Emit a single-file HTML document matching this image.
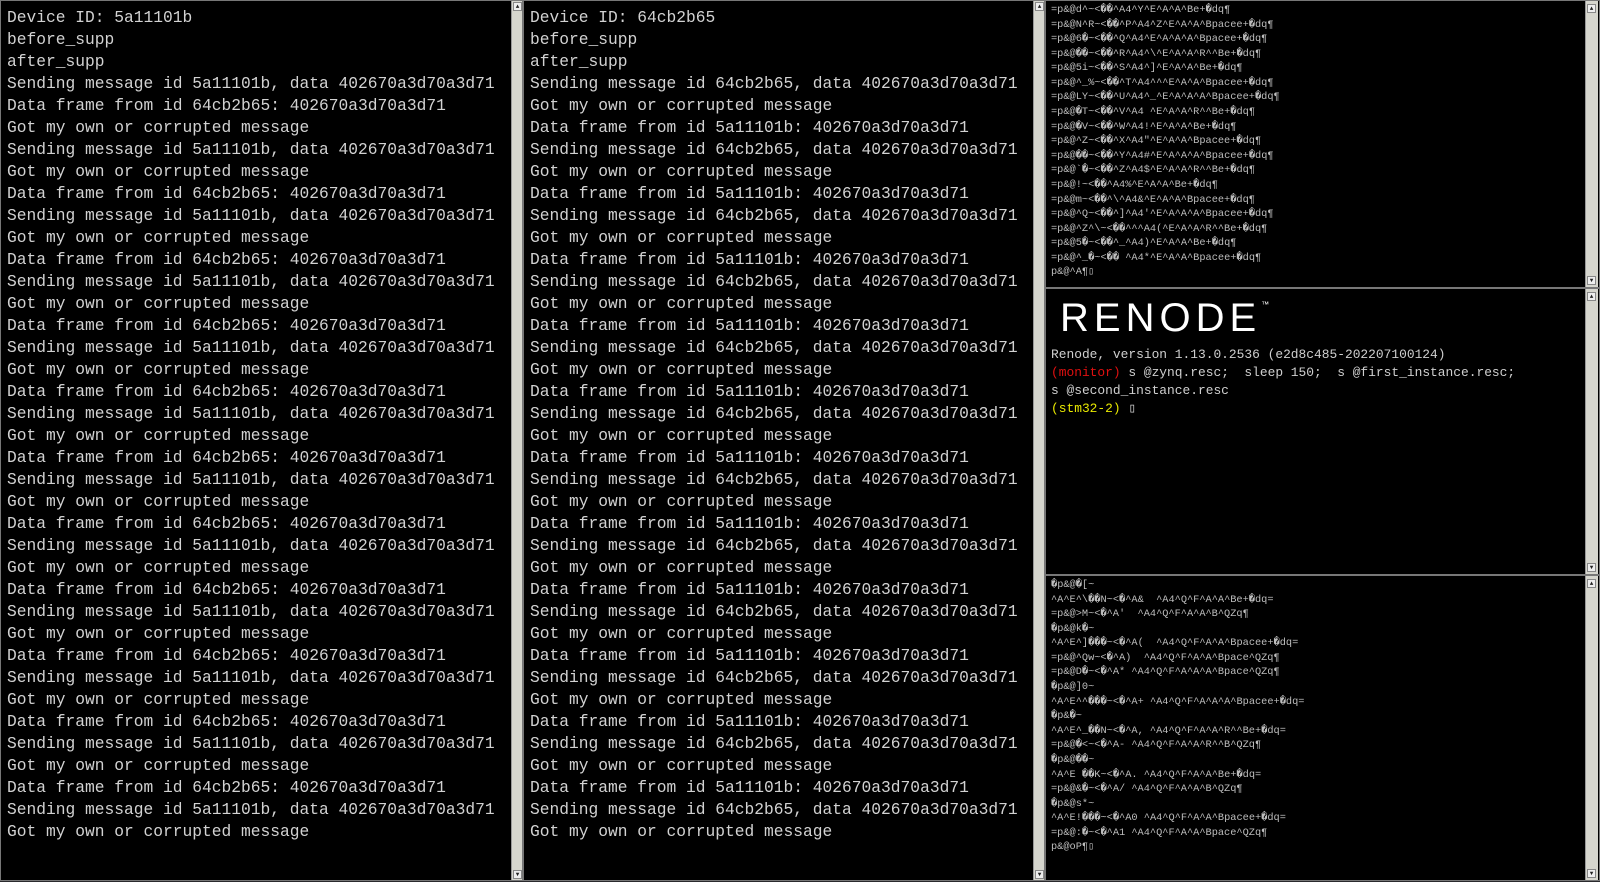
<!DOCTYPE html>
<html><head><meta charset="utf-8"><style>
*{margin:0;padding:0;box-sizing:border-box}
body{width:1600px;height:882px;background:#2a2a2d;overflow:hidden;position:relative;font-family:"Liberation Mono",monospace}
.p{position:absolute;background:#000;border:1px solid #777;overflow:hidden}
.sb{position:absolute;background:#d6d6ce;border-left:1px solid #999}
.ar{position:absolute;left:1px;width:9px;height:9px;background:#eee;border:1px solid #888;font-size:6px;line-height:7px;text-align:center;color:#222}
pre{font-family:"Liberation Mono","DejaVu Sans Mono",monospace;white-space:pre;position:absolute}
.big{font-size:16.25px;line-height:22px;color:#d2d2d2;left:6px;top:6px}
.sm{font-size:10.3px;line-height:14.58px;color:#bdbdbd;left:5px}
</style></head><body>

<div class="p" style="left:0;top:0;width:523px;height:881px">
<pre class="big">Device ID: 5a11101b
before_supp
after_supp
Sending message id 5a11101b, data 402670a3d70a3d71
Data frame from id 64cb2b65: 402670a3d70a3d71
Got my own or corrupted message
Sending message id 5a11101b, data 402670a3d70a3d71
Got my own or corrupted message
Data frame from id 64cb2b65: 402670a3d70a3d71
Sending message id 5a11101b, data 402670a3d70a3d71
Got my own or corrupted message
Data frame from id 64cb2b65: 402670a3d70a3d71
Sending message id 5a11101b, data 402670a3d70a3d71
Got my own or corrupted message
Data frame from id 64cb2b65: 402670a3d70a3d71
Sending message id 5a11101b, data 402670a3d70a3d71
Got my own or corrupted message
Data frame from id 64cb2b65: 402670a3d70a3d71
Sending message id 5a11101b, data 402670a3d70a3d71
Got my own or corrupted message
Data frame from id 64cb2b65: 402670a3d70a3d71
Sending message id 5a11101b, data 402670a3d70a3d71
Got my own or corrupted message
Data frame from id 64cb2b65: 402670a3d70a3d71
Sending message id 5a11101b, data 402670a3d70a3d71
Got my own or corrupted message
Data frame from id 64cb2b65: 402670a3d70a3d71
Sending message id 5a11101b, data 402670a3d70a3d71
Got my own or corrupted message
Data frame from id 64cb2b65: 402670a3d70a3d71
Sending message id 5a11101b, data 402670a3d70a3d71
Got my own or corrupted message
Data frame from id 64cb2b65: 402670a3d70a3d71
Sending message id 5a11101b, data 402670a3d70a3d71
Got my own or corrupted message
Data frame from id 64cb2b65: 402670a3d70a3d71
Sending message id 5a11101b, data 402670a3d70a3d71
Got my own or corrupted message</pre>
<div class="sb" style="left:510px;top:0;width:12px;height:880px"><div class="ar" style="top:1px">▲</div><div class="ar" style="bottom:2px">▼</div></div>
</div>

<div class="p" style="left:523px;top:0;width:522px;height:881px">
<pre class="big">Device ID: 64cb2b65
before_supp
after_supp
Sending message id 64cb2b65, data 402670a3d70a3d71
Got my own or corrupted message
Data frame from id 5a11101b: 402670a3d70a3d71
Sending message id 64cb2b65, data 402670a3d70a3d71
Got my own or corrupted message
Data frame from id 5a11101b: 402670a3d70a3d71
Sending message id 64cb2b65, data 402670a3d70a3d71
Got my own or corrupted message
Data frame from id 5a11101b: 402670a3d70a3d71
Sending message id 64cb2b65, data 402670a3d70a3d71
Got my own or corrupted message
Data frame from id 5a11101b: 402670a3d70a3d71
Sending message id 64cb2b65, data 402670a3d70a3d71
Got my own or corrupted message
Data frame from id 5a11101b: 402670a3d70a3d71
Sending message id 64cb2b65, data 402670a3d70a3d71
Got my own or corrupted message
Data frame from id 5a11101b: 402670a3d70a3d71
Sending message id 64cb2b65, data 402670a3d70a3d71
Got my own or corrupted message
Data frame from id 5a11101b: 402670a3d70a3d71
Sending message id 64cb2b65, data 402670a3d70a3d71
Got my own or corrupted message
Data frame from id 5a11101b: 402670a3d70a3d71
Sending message id 64cb2b65, data 402670a3d70a3d71
Got my own or corrupted message
Data frame from id 5a11101b: 402670a3d70a3d71
Sending message id 64cb2b65, data 402670a3d70a3d71
Got my own or corrupted message
Data frame from id 5a11101b: 402670a3d70a3d71
Sending message id 64cb2b65, data 402670a3d70a3d71
Got my own or corrupted message
Data frame from id 5a11101b: 402670a3d70a3d71
Sending message id 64cb2b65, data 402670a3d70a3d71
Got my own or corrupted message</pre>
<div class="sb" style="left:509px;top:0;width:12px;height:880px"><div class="ar" style="top:1px">▲</div><div class="ar" style="bottom:2px">▼</div></div>
</div>

<div class="p" style="left:1045px;top:0;width:555px;height:288px">
<pre class="sm" style="top:2px">=p&amp;@d^~&lt;��^A4^Y^E^A^A^Be+�dq¶
=p&amp;@N^R~&lt;��^P^A4^Z^E^A^A^Bpacee+�dq¶
=p&amp;@6�~&lt;��^Q^A4^E^A^A^A^Bpacee+�dq¶
=p&amp;@��~&lt;��^R^A4^\^E^A^A^R^^Be+�dq¶
=p&amp;@5i~&lt;��^S^A4^]^E^A^A^Be+�dq¶
=p&amp;@^_%~&lt;��^T^A4^^^E^A^A^Bpacee+�dq¶
=p&amp;@LY~&lt;��^U^A4^_^E^A^A^A^Bpacee+�dq¶
=p&amp;@�T~&lt;��^V^A4 ^E^A^A^R^^Be+�dq¶
=p&amp;@�V~&lt;��^W^A4!^E^A^A^Be+�dq¶
=p&amp;@^Z~&lt;��^X^A4"^E^A^A^Bpacee+�dq¶
=p&amp;@��~&lt;��^Y^A4#^E^A^A^A^Bpacee+�dq¶
=p&amp;@`�~&lt;��^Z^A4$^E^A^A^R^^Be+�dq¶
=p&amp;@!~&lt;��^A4%^E^A^A^Be+�dq¶
=p&amp;@m~&lt;��^\^A4&amp;^E^A^A^Bpacee+�dq¶
=p&amp;@^Q~&lt;��^]^A4'^E^A^A^A^Bpacee+�dq¶
=p&amp;@^Z^\~&lt;��^^^A4(^E^A^A^R^^Be+�dq¶
=p&amp;@5�~&lt;��^_^A4)^E^A^A^Be+�dq¶
=p&amp;@^_�~&lt;�� ^A4*^E^A^A^Bpacee+�dq¶
p&amp;@^A¶▯</pre>
<div class="sb" style="left:539px;top:0;width:13px;height:286px"><div class="ar" style="top:3px">▲</div><div class="ar" style="bottom:2px">▼</div></div>
</div>

<div class="p" style="left:1045px;top:288px;width:555px;height:287px">
<div style="position:absolute;left:14px;top:9px;color:#fff;font-family:'Liberation Sans',sans-serif;font-size:40px;letter-spacing:5px;line-height:40px">RENODE<span style="font-size:8px;vertical-align:top;letter-spacing:0;line-height:14px">™</span></div>
<pre style="left:5px;top:57px;font-size:12.9px;line-height:18px;color:#cfcfcf">Renode, version 1.13.0.2536 (e2d8c485-202207100124)
<span style="color:#e01010">(monitor)</span> s @zynq.resc;  sleep 150;  s @first_instance.resc;
s @second_instance.resc
<span style="color:#e8e800">(stm32-2)</span> ▯</pre>
<div class="sb" style="left:539px;top:0;width:13px;height:285px"><div class="ar" style="top:3px">▲</div><div class="ar" style="bottom:2px">▼</div></div>
</div>

<div class="p" style="left:1045px;top:575px;width:555px;height:306px">
<pre class="sm" style="top:2px">�p&amp;@�[~
^A^E^\��N~&lt;�^A&amp;  ^A4^Q^F^A^A^Be+�dq=
=p&amp;@&gt;M~&lt;�^A'  ^A4^Q^F^A^A^B^QZq¶
�p&amp;@k�~
^A^E^]���~&lt;�^A(  ^A4^Q^F^A^A^Bpacee+�dq=
=p&amp;@^Qw~&lt;�^A)  ^A4^Q^F^A^A^Bpace^QZq¶
=p&amp;@D�~&lt;�^A* ^A4^Q^F^A^A^A^Bpace^QZq¶
�p&amp;@]0~
^A^E^^���~&lt;�^A+ ^A4^Q^F^A^A^A^Bpacee+�dq=
�p&amp;�~
^A^E^_��N~&lt;�^A, ^A4^Q^F^A^A^R^^Be+�dq=
=p&amp;@�&lt;~&lt;�^A- ^A4^Q^F^A^A^R^^B^QZq¶
�p&amp;@��~
^A^E ��K~&lt;�^A. ^A4^Q^F^A^A^Be+�dq=
=p&amp;@&amp;�~&lt;�^A/ ^A4^Q^F^A^A^B^QZq¶
�p&amp;@s*~
^A^E!���~&lt;�^A0 ^A4^Q^F^A^A^Bpacee+�dq=
=p&amp;@:�~&lt;�^A1 ^A4^Q^F^A^A^Bpace^QZq¶
p&amp;@oP¶▯</pre>
<div class="sb" style="left:539px;top:0;width:13px;height:304px"><div class="ar" style="top:3px">▲</div><div class="ar" style="bottom:2px">▼</div></div>
</div>
</body></html>
